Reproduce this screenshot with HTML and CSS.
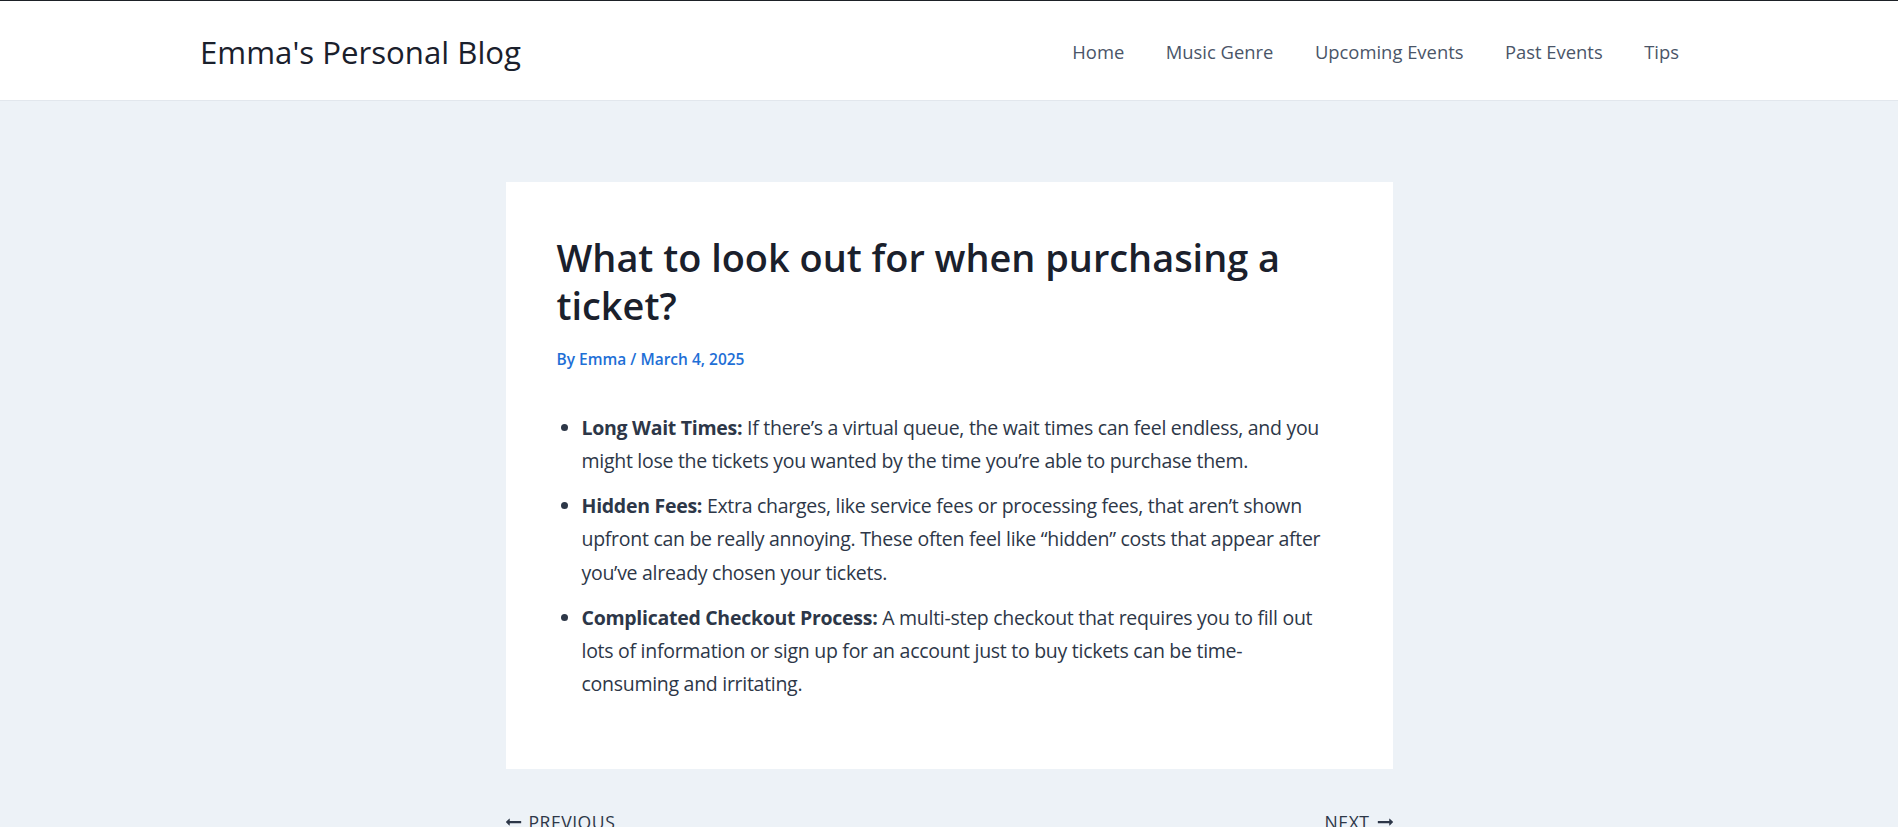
FILE: index.html
```html
<!DOCTYPE html>
<html lang="en">
<head>
<meta charset="utf-8">
<title>What to look out for when purchasing a ticket? – Emma's Personal Blog</title>
<link rel="stylesheet" href="styles.css">
</head>
<body>
<header class="site-header">
  <div class="header-inner">
    <a class="site-title" href="#">Emma's Personal Blog</a>
    <nav class="main-nav">
      <a href="#">Home</a>
      <a href="#">Music Genre</a>
      <a href="#">Upcoming Events</a>
      <a href="#">Past Events</a>
      <a href="#">Tips</a>
    </nav>
  </div>
</header>
<main class="site-main">
  <article class="post-card">
    <h1 class="entry-title">What to look out for when purchasing a ticket?</h1>
    <div class="entry-meta"><a href="#">By Emma</a> / <a href="#">March 4, 2025</a></div>
    <ul class="entry-list">
      <li><strong>Long Wait Times:</strong> If there’s a virtual queue, the wait times can feel endless, and you might lose the tickets you wanted by the time you’re able to purchase them.</li>
      <li><strong>Hidden Fees:</strong> Extra charges, like service fees or processing fees, that aren’t shown upfront can be really annoying. These often feel like “hidden” costs that appear after you’ve already chosen your tickets.</li>
      <li><strong>Complicated Checkout Process:</strong> A multi-step checkout that requires you to fill out lots of information or sign up for an account just to buy tickets can be time-consuming and irritating.</li>
    </ul>
  </article>
  <nav class="post-nav">
    <a class="prev" href="#"><svg class="arrow arrow-left" viewBox="0 0 27 28" aria-hidden="true"><path d="M27.781 14.391l-6 5.531c-0.156 0.141-0.359 0.172-0.547 0.094-0.172-0.078-0.297-0.25-0.297-0.453v-3.5h-19.5c-0.281 0-0.5-0.219-0.5-0.5v-3c0-0.281 0.219-0.5 0.5-0.5h19.5v-3.5c0-0.203 0.109-0.375 0.297-0.453s0.391-0.047 0.547 0.078l6 5.469c0.094 0.094 0.156 0.219 0.156 0.359v0c0 0.141-0.063 0.281-0.156 0.375z"/></svg>Previous</a>
    <a class="next" href="#">Next<svg class="arrow" viewBox="0 0 27 28" aria-hidden="true"><path d="M27.781 14.391l-6 5.531c-0.156 0.141-0.359 0.172-0.547 0.094-0.172-0.078-0.297-0.25-0.297-0.453v-3.5h-19.5c-0.281 0-0.5-0.219-0.5-0.5v-3c0-0.281 0.219-0.5 0.5-0.5h19.5v-3.5c0-0.203 0.109-0.375 0.297-0.453s0.391-0.047 0.547 0.078l6 5.469c0.094 0.094 0.156 0.219 0.156 0.359v0c0 0.141-0.063 0.281-0.156 0.375z"/></svg></a>
  </nav>
</main>
</body>
</html>
```
FILE: styles.css
```css
* { box-sizing: border-box; }

html, body {
  margin: 0;
  padding: 0;
}

body {
  background: #edf2f7;
  font-family: "Open Sans", "Noto Sans", "Liberation Sans", sans-serif;
  color: #2d3748;
  font-size: 19.5px;
  line-height: 33.4px;
}

a { text-decoration: none; color: inherit; }

.site-header {
  background: #ffffff;
  border-top: 1px solid #1d2127;
  border-bottom: 1px solid #e2e7ed;
}

.header-inner {
  width: 1498px;
  margin: 0 auto;
  height: 99px;
  padding-top: 4px;
  display: flex;
  align-items: center;
  justify-content: space-between;
}

.site-title {
  font-size: 31.2px;
  font-weight: 500;
  line-height: 1.2;
  color: #1a202c;
}

.main-nav {
  display: flex;
  align-items: center;
  margin-bottom: 2px;
}

.main-nav a {
  font-size: 18.4px;
  line-height: 1.4;
  color: #4a5568;
  padding: 0 20.75px;
}

.main-nav a:last-child { padding-right: 19px; }

.site-main {
  width: 887px;
  margin: 81px auto 0;
}

.post-card {
  background: #ffffff;
  padding: 51px 51px 68px;
}

.entry-title {
  margin: 0;
  font-size: 37.9px;
  line-height: 48.4px;
  font-weight: 600;
  color: #1a202c;
}

.entry-meta {
  margin-top: 17px;
  font-size: 15.5px;
  line-height: 24px;
  font-weight: 600;
  color: #1e6fd6;
}

.entry-list {
  margin: 40px 0 0;
  padding: 0 9px 0 25px;
  letter-spacing: -0.28px;
}

.entry-list li + li { margin-top: 11.4px; }

.entry-list strong {
  font-weight: 700;
  color: #2d3748;
}

.post-nav {
  margin-top: 40px;
  display: flex;
  justify-content: space-between;
  font-size: 17.6px;
  line-height: 27px;
  text-transform: uppercase;
  letter-spacing: 0.5px;
  color: #2d3748;
}

.post-nav a {
  display: flex;
  align-items: center;
  gap: 7px;
}

.arrow {
  width: 16px;
  height: 16px;
  fill: currentColor;
}

.arrow-left { transform: scaleX(-1); }
```
